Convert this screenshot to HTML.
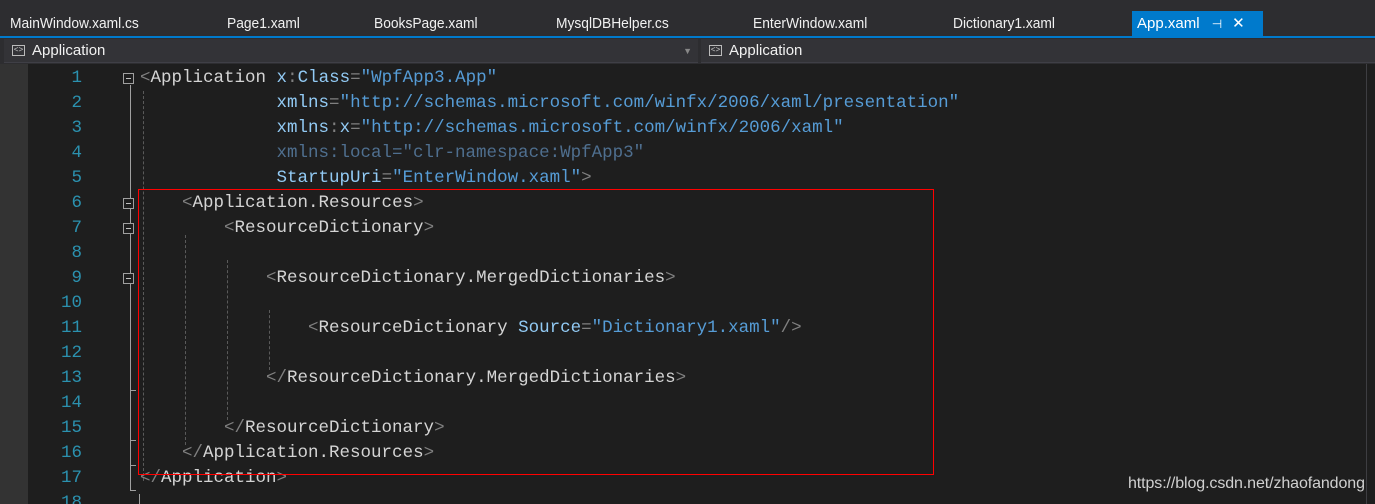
<!DOCTYPE html>
<html><head><meta charset="utf-8"><style>
*{margin:0;padding:0;box-sizing:border-box}
html,body{width:1375px;height:504px;overflow:hidden}
body{background:#1e1e1e;position:relative;font-family:"Liberation Sans",sans-serif}
.tabs{position:absolute;left:0;top:0;width:1375px;height:36px;background:#2d2d30}
.tab{position:absolute;top:12px;height:24px;color:#f1f1f1;font-size:15px;line-height:24px;transform:scaleX(0.92);transform-origin:left}
.act{position:absolute;left:1132px;top:11px;width:131px;height:25px;background:#007acc;color:#fff;font-size:15px;line-height:25px;padding-left:5px}
.blue{position:absolute;left:0;top:36px;width:1375px;height:2px;background:#007acc}
.nav{position:absolute;left:0;top:38px;width:1375px;height:26px;background:#2d2d30}
.dd{position:absolute;top:1px;height:24px;background:#333337;border-bottom:1px solid #3f3f46;color:#f1f1f1;font-size:15px;line-height:24px;padding-left:28px}
.ic{position:absolute;left:8px;top:6px;width:13px;height:11px;border:1px solid #bbb;color:#ccc;font-size:8px;line-height:9px;text-align:center;font-family:"Liberation Mono",monospace}
.left{position:absolute;left:0;top:64px;width:28px;height:440px;background:#333333}
.ln{position:absolute;left:28px;width:54px;text-align:right;color:#2b91af;height:25px;line-height:25px;font-family:"Liberation Mono",monospace;font-size:17.5px}
.l{position:absolute;left:140px;height:25px;line-height:25px;white-space:pre;color:#d4d4d4;font-family:"Liberation Mono",monospace;font-size:17.5px}
.b{color:#808080}.a{color:#92caf4}.v{color:#569cd6}.d{color:#4f6f8f}
.box{position:absolute;left:123px;width:11px;height:11px;border:1px solid #a0a0a0;background:#1e1e1e}
.box:after{content:"";position:absolute;left:2px;top:4px;width:5px;height:1px;background:#c0c0c0}
.g{position:absolute;width:0;border-left:1px dashed #5a5a5a}
#c{position:absolute;left:0;top:2px;width:1375px;height:502px}
</style></head><body>
<div class="tabs">
<div class="tab" style="left:10px">MainWindow.xaml.cs</div>
<div class="tab" style="left:227px">Page1.xaml</div>
<div class="tab" style="left:374px">BooksPage.xaml</div>
<div class="tab" style="left:556px">MysqlDBHelper.cs</div>
<div class="tab" style="left:753px">EnterWindow.xaml</div>
<div class="tab" style="left:953px">Dictionary1.xaml</div>
<div class="act">App.xaml <span style="font-size:12px;margin-left:8px">⊣</span><span style="margin-left:10px">✕</span></div>
</div>
<div class="blue"></div>
<div class="nav">
<div class="dd" style="left:4px;width:694px"><div class="ic">&lt;&gt;</div>Application<span style="position:absolute;right:6px;top:0;color:#888;font-size:9px">▼</span></div>
<div class="dd" style="left:701px;width:674px"><div class="ic">&lt;&gt;</div>Application</div>
</div>
<div class="left"></div>
<div style="position:absolute;left:1366px;top:64px;width:1px;height:440px;background:#3e3e42"></div>
<div id="c">
<div class="ln" style="top:64px">1</div><div class="ln" style="top:89px">2</div><div class="ln" style="top:114px">3</div><div class="ln" style="top:139px">4</div><div class="ln" style="top:164px">5</div><div class="ln" style="top:189px">6</div><div class="ln" style="top:214px">7</div><div class="ln" style="top:239px">8</div><div class="ln" style="top:264px">9</div><div class="ln" style="top:289px">10</div><div class="ln" style="top:314px">11</div><div class="ln" style="top:339px">12</div><div class="ln" style="top:364px">13</div><div class="ln" style="top:389px">14</div><div class="ln" style="top:414px">15</div><div class="ln" style="top:439px">16</div><div class="ln" style="top:464px">17</div><div class="ln" style="top:489px">18</div>

<div style="position:absolute;left:130px;top:83px;width:1px;height:406px;background:#a0a0a0"></div>
<div style="position:absolute;left:130px;top:488px;width:6px;height:1px;background:#a0a0a0"></div>
<div style="position:absolute;left:130px;top:463px;width:6px;height:1px;background:#a0a0a0"></div>
<div style="position:absolute;left:130px;top:438px;width:6px;height:1px;background:#a0a0a0"></div>
<div style="position:absolute;left:130px;top:388px;width:6px;height:1px;background:#a0a0a0"></div>
<div style="position:absolute;left:139px;top:492px;width:1px;height:12px;background:#a0a0a0"></div>
<div class="box" style="top:71px"></div><div class="box" style="top:196px"></div><div class="box" style="top:221px"></div><div class="box" style="top:271px"></div>

<div class="g" style="left:143px;top:89px;height:390px"></div>
<div class="g" style="left:185px;top:233px;height:210px"></div>
<div class="g" style="left:227px;top:258px;height:160px"></div>
<div class="g" style="left:269px;top:308px;height:60px"></div>

<div class="l" style="top:64px"><span class="b">&lt;</span>Application <span class="a">x</span><span class="b">:</span><span class="a">Class</span><span class="b">=</span><span class="v">"WpfApp3.App"</span></div>
<div class="l" style="top:89px">             <span class="a">xmlns</span><span class="b">=</span><span class="v">"http://schemas.microsoft.com/winfx/2006/xaml/presentation"</span></div>
<div class="l" style="top:114px">             <span class="a">xmlns</span><span class="b">:</span><span class="a">x</span><span class="b">=</span><span class="v">"http://schemas.microsoft.com/winfx/2006/xaml"</span></div>
<div class="l d" style="top:139px">             xmlns:local="clr-namespace:WpfApp3"</div>
<div class="l" style="top:164px">             <span class="a">StartupUri</span><span class="b">=</span><span class="v">"EnterWindow.xaml"</span><span class="b">&gt;</span></div>
<div class="l" style="top:189px">    <span class="b">&lt;</span>Application.Resources<span class="b">&gt;</span></div>
<div class="l" style="top:214px">        <span class="b">&lt;</span>ResourceDictionary<span class="b">&gt;</span></div>
<div class="l" style="top:264px">            <span class="b">&lt;</span>ResourceDictionary.MergedDictionaries<span class="b">&gt;</span></div>
<div class="l" style="top:314px">                <span class="b">&lt;</span>ResourceDictionary <span class="a">Source</span><span class="b">=</span><span class="v">"Dictionary1.xaml"</span><span class="b">/&gt;</span></div>
<div class="l" style="top:364px">            <span class="b">&lt;/</span>ResourceDictionary.MergedDictionaries<span class="b">&gt;</span></div>
<div class="l" style="top:414px">        <span class="b">&lt;/</span>ResourceDictionary<span class="b">&gt;</span></div>
<div class="l" style="top:439px">    <span class="b">&lt;/</span>Application.Resources<span class="b">&gt;</span></div>
<div class="l" style="top:464px"><span class="b">&lt;/</span>Application<span class="b">&gt;</span></div>
</div>
<div style="position:absolute;left:138px;top:189px;width:796px;height:286px;border:1px solid #ff0000"></div>
<div style="position:absolute;left:1128px;top:475px;color:#d0d0d0;font-size:16px;letter-spacing:-0.1px">https://blog.csdn.net/zhaofandong</div>
</body></html>
